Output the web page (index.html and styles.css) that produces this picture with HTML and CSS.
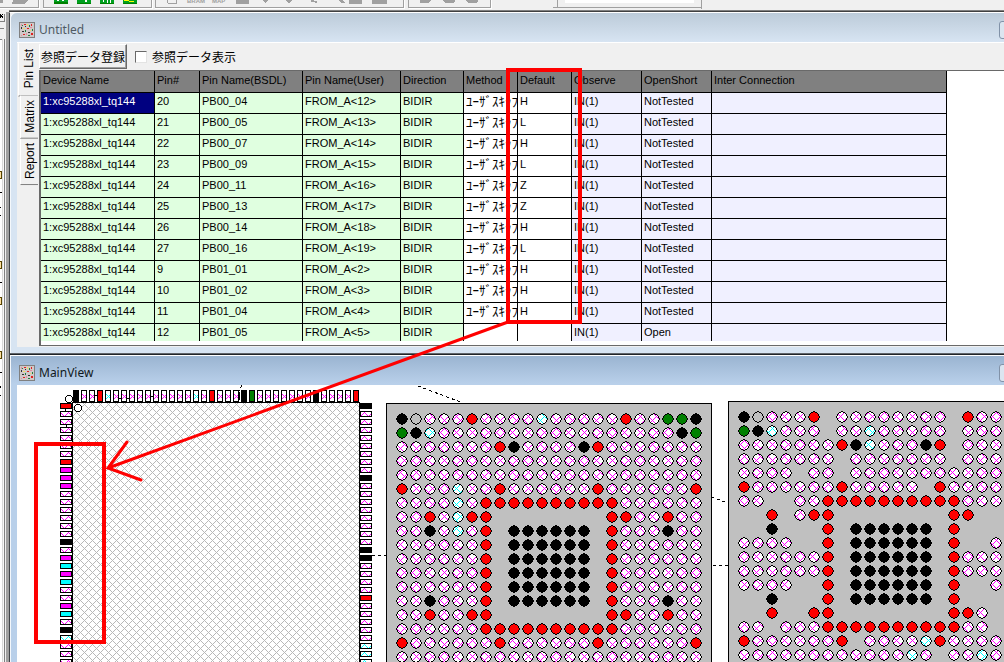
FILE: index.html
```html
<!DOCTYPE html>
<html lang="ja">
<head>
<meta charset="utf-8">
<title>Untitled</title>
<link rel="stylesheet" href="styles.css">
</head>
<body>
<div class="app">
  <header class="toolbar">
    <svg class="toolbar-art" aria-hidden="true" shape-rendering="crispEdges">
      <g fill="#a0a0a0">
        <path d="M0 0h3v3H0zM13 0h15l-3 4H12z"/>
        <path d="M0 7h38v1H0zM38 0h1v8h-1zM43 0h1v8h-1zM44 7h107v1H44zM151 0h1v8h-1zM155 0h1v8h-1zM156 7h247v1H156zM403 0h1v8h-1zM408 0h1v8h-1zM409 7h82v1h-82zM490 0h1v8h-1zM553 7h148v1H553zM557 0h1v7h-1zM701 0h1v9h-1z"/>
        <path d="M167 0h1v3h-1zM168 3h9v1h-9zM176 0h1v3h-1zM236 0h13v4h-13zM263 0h5v1h-1v1h-1v1h-1V2h-1V1h-1zM286 0h6v1h-1v1h-1v1h-2V2h-1V1h-1zM311 0h3v1h3v2h-2V2h-4zM335 0h7l4 3h-5l-3-3zM349 0h13v4h-13zM372 0h15v4h-15zM420 0h12l-4 3h-8zM443 0h12v1l-2 2h-8zM466 0h12v1l-2 2h-8z"/>
      </g>
      <path fill="#fff" d="M39 0h1v9H0V8h39zM152 0h1v9H43V8h109zM404 0h1v9H155V8h249zM491 0h1v9h-83V8h82zM565 0h129v3H565z"/>
      <path fill="#008000" d="M54 0h14v4H54zM77 0h14v4H77zM100 0h14v4h-14zM123 0h14v4h-14z"/>
      <path fill="#00a020" d="M54 0h14v2H54zM77 0h14v3H77zM100 0h14v3h-14zM123 0h14v3h-14z"/>
      <path fill="#fff" d="M57 0h2v1h-2zM62 0h2v1h-2zM85 0h2v2h-2zM103 0h1v2h-1zM107 0h1v3h-1zM110 0h1v3h-1z"/>
      <path fill="#ff0" d="M124 0h5v1h-5zM129 1h5v1h-5z"/>
      <text class="tool-label" x="187" y="3">BRAM</text>
      <text class="tool-label" x="212" y="3">MAP</text>
    </svg>
  </header>
  <div class="workspace">
    <aside class="dock">
      <svg class="dock-art" aria-hidden="true" shape-rendering="crispEdges">
        <path fill="#f0f0f0" d="M0 0h5v27H0z"/>
        <path fill="#808080" d="M4 2h1v8H4zM0 9h5v1H0zM0 16h4v1H0zM0 27h2v1H0z"/>
        <path stroke="#000" d="M0 2l3 4M3 2l-3 4"/>
        <g fill="#ffe0a0" stroke="#554400"><path d="M-2 159.500h3.500v7H-2zM-2 249.500h3.500v7H-2zM-2 285.500h3.500v7H-2zM-2 339.500h3.500v7H-2z"/></g>
        <path fill="#000" d="M0 180h2v1H0zM0 195h1v1H0zM0 203h1v1H0zM0 270h2v1H0zM0 360h2v1H0zM0 374h1v2H0zM0 383h1v1H0z"/>
      </svg>
    </aside>
    <main class="mdi">
      <section class="window window-list">
        <div class="titlebar">
          <svg class="title-icon" viewBox="0 0 16 16" aria-hidden="true" shape-rendering="crispEdges"><use href="#chip-icon"/></svg>
          <h1 class="title">Untitled</h1>
          <button class="caption-button" type="button" aria-label="Minimize"></button>
        </div>
        <div class="list-body">
          <nav class="tabs">
            <button class="tab tab-active" type="button">Pin List</button>
            <button class="tab" type="button">Matrix</button>
            <button class="tab" type="button">Report</button>
          </nav>
          <div class="list-page">
            <div class="actions">
              <button class="push" type="button">参照データ登録</button>
              <label class="check"><input class="check-box" type="checkbox">参照データ表示</label>
            </div>
            <div class="grid-frame">
              <div class="grid-scroll">
                <table class="pins">
                  <colgroup>
                    <col class="c-device"><col class="c-pin"><col class="c-bsdl"><col class="c-user"><col class="c-dir"><col class="c-method"><col class="c-default"><col class="c-observe"><col class="c-open"><col class="c-inter">
                  </colgroup>
                  <thead>
                    <tr><th>Device Name</th><th>Pin#</th><th>Pin Name(BSDL)</th><th>Pin Name(User)</th><th>Direction</th><th>Method</th><th>Default</th><th>Observe</th><th>OpenShort</th><th>Inter Connection</th></tr>
                  </thead>
                  <tbody id="pin-rows"></tbody>
                </table>
              </div>
            </div>
          </div>
        </div>
      </section>
      <section class="window window-main">
        <div class="titlebar">
          <svg class="title-icon" viewBox="0 0 16 16" aria-hidden="true" shape-rendering="crispEdges">
            <g id="chip-icon">
              <path fill="#d0c8c8" stroke="#808080" d="M.5.5h15v15H.5z"/>
              <path fill="#303030" d="M2 5h1v2H2zM3 9h2v1H3zM6 4h1v1H6zM9 10h2v1H9z"/>
              <path fill="#e02020" d="M5 2h2v1H5zM8 6h2v1H8zM12 11h2v2h-2zM4 12h2v1H4zM12 2h1v2h-1z"/>
              <path fill="#208040" d="M3 3h1v1H3zM10 3h1v2h-1zM6 8h1v2H6zM13 7h1v2h-1zM9 13h2v1H9z"/>
              <path fill="#f0e060" d="M8 2h1v2H8zM4 6h2v1H4zM11 8h1v1h-1z"/>
              <path fill="#e090a0" d="M2 2h1v2H2zM7 11h1v2H7zM2 13h1v1H2zM11 5h2v1h-2z"/>
            </g>
          </svg>
          <h2 class="title">MainView</h2>
          <button class="caption-button" type="button" aria-label="Minimize"></button>
        </div>
        <svg class="board" role="img" aria-label="Board view" shape-rendering="crispEdges">
          <defs>
            <path id="cross" d="M0 0h1v1H0zM1 1h1v1H1zM2 2h1v1H2zM3 3h1v1H3zM4 4h1v1H4zM5 5h1v1H5zM6 6h1v1H6zM7 7h1v1H7zM7 1h1v1H7zM6 2h1v1H6zM5 3h1v1H5zM3 5h1v1H3zM2 6h1v1H2zM1 7h1v1H1z"/>
            <pattern id="hatch-m" width="8" height="8" patternUnits="userSpaceOnUse"><path fill="#fff" d="M0 0h8v8H0z"/><use href="#cross" fill="#f0f"/></pattern>
            <pattern id="hatch-c" width="8" height="8" patternUnits="userSpaceOnUse"><path fill="#fff" d="M0 0h8v8H0z"/><use href="#cross" fill="#0ff"/></pattern>
            <pattern id="hatch-g" width="8" height="8" patternUnits="userSpaceOnUse"><path fill="#fff" d="M0 0h8v8H0z"/><use href="#cross" fill="#b8b8b8"/></pattern>
          </defs>
          <g transform="translate(-17 -385)">
            <g class="nets">
              <path d="M418 386l45 17M711 497l17 6M713 565.500h15M372 555.500h14M242 385l-3 6"/>
            </g>
            <rect class="package" x="72.500" y="402.500" width="287" height="300" fill="url(#hatch-g)"/>
            <circle class="outline" cx="69" cy="399" r="3.500"/>
            <circle class="outline dot" cx="78" cy="408" r="3.500"/>
            <rect class="package" x="386.500" y="403.500" width="325" height="330" fill="#c0c0c0"/>
            <rect class="package" x="728.500" y="401.500" width="325" height="330" fill="#c0c0c0"/>
            <g id="parts"></g>
            <path class="marks" d="M95 395.500h3M119 398.500h2M127 398.500h2M151 396.500h3M65.500 409v2M66.500 425v2M239.500 392v8"/>
          </g>
        </svg>
      </section>
    </main>
  </div>
  <svg class="notes" aria-hidden="true">
    <rect x="508" y="70" width="72" height="252"/>
    <rect x="36" y="444" width="68" height="198"/>
    <path class="arrow" d="M508 322L108 468M127 442L108 468L141 480"/>
  </svg>
</div>
<script src="app.js"></script>
</body>
</html>
```
FILE: styles.css
```css
* { box-sizing: border-box; }

body {
  margin: 0;
  overflow: hidden;
  background: #f0f0f0;
  color: #000;
  font: 11px/16px "Liberation Sans", "Noto Sans CJK JP", sans-serif;
}

button { font: inherit; color: inherit; padding: 0; margin: 0; }

.app { position: relative; display: flex; flex-direction: column; height: 100vh; }

.toolbar { flex: none; height: 12px; overflow: hidden; }
.toolbar-art { display: block; width: 100%; height: 12px; }
.tool-label { font: bold 6px "Liberation Sans", sans-serif; fill: #a0a0a0; }

.workspace { flex: 1; display: flex; min-height: 0; }

.dock {
  flex: none;
  width: 9px;
  background: linear-gradient(to right, #fff 2px, #d8d8d8 2px 3px, #f8f8f8 3px 4px, #808080 4px 5px, #f0f0f0 5px 6px, #a0a0a0 6px);
}
.dock-art { display: block; width: 5px; height: 100%; }

.mdi {
  flex: 1;
  min-width: 0;
  display: flex;
  flex-direction: column;
  border-left: 1px solid #404448;
  border-top: 1px solid #fff;
  box-shadow: 0 -1px #404040, 0 -2px #808080;
}

.window { border-left: 1px solid #f4f8fc; }
.window-list {
  flex: none;
  background: #d7e4f2;
  border-top-left-radius: 6px;
  padding: 0 0 6px 6px;
}
.window-main {
  flex: 1;
  min-height: 0;
  display: flex;
  flex-direction: column;
  padding-left: 6px;
  background: linear-gradient(#9ab4d1, #b9d0ea 28px);
  border-top: 1px solid #fff;
  box-shadow: 0 -1px #202428, 0 -2px #606468;
  margin-top: 2px;
}

.titlebar { flex: none; display: flex; align-items: center; gap: 4px; height: 29px; padding: 4px 0 0 2px; }
.window-list .titlebar {
  background: linear-gradient(#bccbd9, #d7e4f2);
  margin-left: -6px;
  padding-left: 8px;
  border-top-left-radius: 6px;
}
.title-icon { width: 16px; height: 16px; flex: none; }
.title { flex: 1; margin: 0; font: 12px/16px "Noto Sans", sans-serif; color: #505a64; }
.window-main .title { color: #101820; }
.caption-button {
  flex: none;
  width: 28px;
  height: 18px;
  margin-right: -23px;
  border: 1px solid #8192a8;
  border-radius: 3px;
  background: #dbe5f0;
}

.list-body { display: flex; background: #f0f0f0; border-top: 1px solid #fff; }

.tabs { flex: none; width: 22px; display: flex; flex-direction: column; padding-left: 3px; }
.tab {
  writing-mode: vertical-rl;
  transform: rotate(180deg);
  width: 18px;
  border: 0;
  border-top: 1px solid #808080;
  border-right: 1px solid #fff;
  background: #f0f0f0;
  font-size: 12px;
  line-height: 16px;
  padding: 5px 0 4px;
}
.tab-active { width: 20px; margin-left: -2px; padding: 7px 0 6px; }

.list-page { flex: 1; min-width: 0; padding-bottom: 1px; }
.actions { display: flex; align-items: center; gap: 8px; height: 27px; }
.push, .check { font: 12px/16px "Noto Sans CJK JP", sans-serif; }
.push {
  width: 88px;
  height: 25px;
  border: 1px solid;
  border-color: #fff #696969 #696969 #fff;
  box-shadow: inset -1px -1px #a0a0a0;
  background: #f0f0f0;
  white-space: nowrap;
}
.check { display: flex; align-items: center; gap: 5px; }
.check-box {
  appearance: none;
  width: 12px;
  height: 12px;
  margin: 0;
  background: #fff;
  border: 1px solid;
  border-color: #696969 #e3e3e3 #e3e3e3 #696969;
}

.grid-frame {
  padding-bottom: 4px;
  background: #fff;
  border: 1px solid #696969;
  border-right: 0;
  border-left-width: 2px;
}
.grid-scroll { height: 270px; overflow: hidden; }
.pins { table-layout: fixed; width: 906px; border-spacing: 0; }
.c-device { width: 114px; }
.c-pin { width: 45px; }
.c-bsdl { width: 103px; }
.c-user { width: 98px; }
.c-dir { width: 63px; }
.c-method, .c-default { width: 54px; }
.c-observe, .c-open { width: 70px; }
.c-inter { width: 235px; }
.pins th, .pins td {
  height: 21px;
  padding: 0 0 4px 2px;
  border: 0 solid #000;
  border-width: 0 1px 1px 0;
  text-align: left;
  font-weight: normal;
  line-height: 16px;
  white-space: nowrap;
  overflow: hidden;
}
.pins th { height: 22px; background: #808080; }
.pins td { background: #f0f0ff; }
.pins td.id { background: #e0ffe0; }
.pins td.edit { background: #fff; }
.pins td.selected { background: #000080; color: #fff; }
.pins td.method { font: 13px/16px "Noto Sans CJK JP", sans-serif; }

.board { display: block; flex: 1; width: 100%; min-height: 0; background: #fff; }
.nets path { stroke: #000; fill: none; stroke-dasharray: 3 3; }
.marks { stroke: #000; fill: none; }
.package { stroke: #000; }
.outline { stroke: #000; fill: none; }
.dot { fill: #fff; }
.part { stroke: #000; }
.s-m { fill: url(#hatch-m); }
.s-c { fill: url(#hatch-c); }
.s-o { fill: #c0c0c0; }
.s-K { fill: #000; }
.s-R { fill: #f00; }
.s-G { fill: #008000; }
.s-M { fill: #f0f; }
.s-C { fill: #0ff; }

.notes { position: absolute; inset: 0; width: 100%; height: 100%; pointer-events: none; fill: none; stroke: #f00; stroke-width: 4; }
.arrow { stroke-width: 3; stroke-linecap: round; }
```
FILE: app.js
```js
const rows = [
  ["20", "PB00_04", "12", "H"],
  ["21", "PB00_05", "13", "L"],
  ["22", "PB00_07", "14", "H"],
  ["23", "PB00_09", "15", "L"],
  ["24", "PB00_11", "16", "Z"],
  ["25", "PB00_13", "17", "Z"],
  ["26", "PB00_14", "18", "H"],
  ["27", "PB00_16", "19", "L"],
  ["9", "PB01_01", "2", "H"],
  ["10", "PB01_02", "3", "H"],
  ["11", "PB01_04", "4", "H"],
  ["12", "PB01_05", "5", ""]
];

const body = document.getElementById("pin-rows");
rows.forEach(([pin, bsdl, user, level], i) => {
  const cells = [
    ["1:xc95288xl_tq144", i ? "id" : "id selected"],
    [pin, "id"],
    [bsdl, "id"],
    [`FROM_A<${user}>`, "id"],
    ["BIDIR", "id"],
    [level ? "ﾕｰｻﾞｽｷｯﾌﾟ" : "", "edit method"],
    [level, "edit"],
    ["IN(1)", ""],
    [level ? "NotTested" : "Open", ""],
    ["", ""]
  ];
  const tr = body.insertRow();
  cells.forEach(([text, cls]) => {
    const td = tr.insertCell();
    td.textContent = text;
    td.className = cls;
  });
});

const parts = document.getElementById("parts");

function add(tag, state, attrs) {
  const el = document.createElementNS("http://www.w3.org/2000/svg", tag);
  for (const key in attrs) el.setAttribute(key, attrs[key]);
  el.setAttribute("class", "part s-" + state);
  parts.appendChild(el);
}

function lead(states, x, y, dx, dy, width, height) {
  [...states].forEach((s, i) => add("rect", s, { x: x + dx * i + 0.5, y: y + dy * i + 0.5, width: width - 1, height: height - 1 }));
}

function balls(lines, x, y) {
  lines.forEach((line, r) => [...line].forEach((s, c) => {
    if (s !== ".") add("circle", s, { cx: x + 14 * c, cy: y + 14 * r, r: 5.2 });
  }));
}

lead("KmmRcmmmmmmmmmmcmRmmmKGmmmmmmmKmmmmR", 73, 390, 8, 0, 6, 12);
lead("RmmmmmmRMMMmmmmmmKmMCMCmmMCmKcmmm", 60, 403, 0, 8, 12, 6);
lead("KmmmmmmmmKmmmmmmmmKKmmmmRmmmmmccc", 360, 403, 0, 8, 12, 6);

balls([
  "KommmRmmmmcmmmmmRmmGGK",
  "GKcmmmmmmmmmmmmmmmmmKG",
  "mmmmmmmRKmmmmKRmmmmmmm",
  "mmmmmmmmmmmmmmmmmmmmmm",
  "mmmmmmmmmmmmmmmmmmmmmm",
  "RmmmcmmRmmmmmmRmmmmmmR",
  "mmmmcmRRRRRRRRRRmmmmmm",
  "mmRmcRR........RRmmRmm",
  "mmKmcmR.KKKKKK.RmmmKmm",
  "mmmmmmR.KKKKKK.Rmmmmmm",
  "mmmmmmR.KKKKKK.Rmmmmmm",
  "mmmmmmR.KKKKKK.Rmmmmmm",
  "mmmmmmR.KKKKKK.Rmmmmmm",
  "mmKmmmR.KKKKKK.RmmmKmm",
  "mmRmmRR........RRmmRmm",
  "mmmmmmRRRRRRRRRRmmmmmm",
  "RmmmmmmRmmmmmmRmmmmmmR",
  "mmmmmmmmmmmmmmmmmmmmmm"
], 402, 419);

balls([
  "KommmR.mmmmmmmm.Rmm",
  "GKcmmm.mmcmmmmm.mmm",
  "mmmmmmmRKcmmmKR.mmm",
  "mmmmmmm.mmmmmmm.mmm",
  "mmmm.mm.mmmmmmmmmmm",
  "RmmmmmmRmmmmm.Rmmmm",
  "mm..mmRRRRRRRRRRmmm",
  "..R.mRR........RR..",
  "..K...R.KKKKKK.R...",
  "mmmm..R.KKKKKK.R..m",
  "mmmmmmR.KKKKKK.Rmmm",
  "mmmmmmR.KKKKKK.Rmmm",
  "mmmm..R.KKKKKK.R..m",
  "..K...R.KKKKKK.R...",
  "..R..RR........RRm.",
  "mm.mmmRRRRRRRRRRmm.",
  "RmmmmmmR.mmmmcRmmmm",
  "mmmmmmmmmmmmcm.mmcm"
], 744, 417);
```
